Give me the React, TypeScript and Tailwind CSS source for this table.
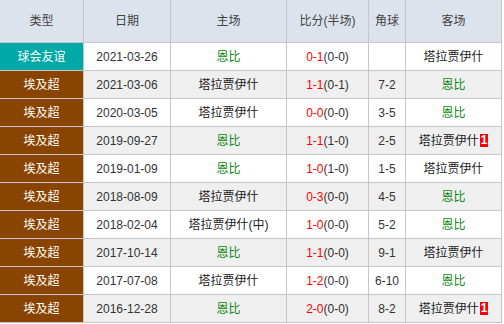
const ENBI = "恩比";
const TARAGA = "塔拉贾伊什";

type Match = {
  league: string;
  friendly?: boolean;
  date: string;
  home: string;
  score: string;
  half: string;
  corner: string;
  away: string;
  redCard?: number;
};

const matches: Match[] = [
  { league: "球会友谊", friendly: true, date: "2021-03-26", home: ENBI, score: "0-1", half: "(0-0)", corner: "", away: TARAGA },
  { league: "埃及超", date: "2021-03-06", home: TARAGA, score: "1-1", half: "(0-1)", corner: "7-2", away: ENBI },
  { league: "埃及超", date: "2020-03-05", home: TARAGA, score: "0-0", half: "(0-0)", corner: "3-5", away: ENBI },
  { league: "埃及超", date: "2019-09-27", home: ENBI, score: "1-1", half: "(1-0)", corner: "2-5", away: TARAGA, redCard: 1 },
  { league: "埃及超", date: "2019-01-09", home: ENBI, score: "1-0", half: "(1-0)", corner: "1-5", away: TARAGA },
  { league: "埃及超", date: "2018-08-09", home: TARAGA, score: "0-3", half: "(0-0)", corner: "4-5", away: ENBI },
  { league: "埃及超", date: "2018-02-04", home: "塔拉贾伊什(中)", score: "1-0", half: "(0-0)", corner: "5-2", away: ENBI },
  { league: "埃及超", date: "2017-10-14", home: ENBI, score: "1-1", half: "(0-0)", corner: "9-1", away: TARAGA },
  { league: "埃及超", date: "2017-07-08", home: TARAGA, score: "1-2", half: "(0-0)", corner: "6-10", away: ENBI },
  { league: "埃及超", date: "2016-12-28", home: ENBI, score: "2-0", half: "(0-0)", corner: "8-2", away: TARAGA, redCard: 1 },
];

const headers = ["类型", "日期", "主场", "比分(半场)", "角球", "客场"];

const cell = "flex items-center justify-center border-r border-b border-[#c6c6c6]";

function Team({ name }: { name: string }) {
  return <span className={name === ENBI ? "text-[#118811]" : "text-[#222]"}>{name}</span>;
}

export default function App() {
  return (
    <div
      className="w-[504px] h-[324px] bg-white text-[12px] text-[#333]"
      style={{ fontFamily: '"Liberation Sans", "Noto Sans CJK SC", sans-serif' }}
    >
      <div className="grid grid-cols-[84px_87px_116px_82px_37px_96px] grid-rows-[43px_repeat(10,28px)] w-[502px]">
        {headers.map((h) => (
          <div key={h} className={`${cell} bg-[#dce3ec] text-[#444]`}>
            {h}
          </div>
        ))}

        {matches.map((m, i) => {
          const rowBg = i % 2 === 1 ? "bg-[#efefef]" : "bg-white";
          return (
            <div key={m.date} className="contents">
              <div className={`${cell} text-white ${m.friendly ? "bg-[#00a8a8]" : "bg-[#884400]"}`}>
                {m.league}
              </div>
              <div className={`${cell} ${rowBg}`}>{m.date}</div>
              <div className={`${cell} ${rowBg}`}>
                <Team name={m.home} />
              </div>
              <div className={`${cell} ${rowBg}`}>
                <span className="text-[#ff0000]">{m.score}</span>
                <span>{m.half}</span>
              </div>
              <div className={`${cell} ${rowBg}`}>{m.corner}</div>
              <div className={`${cell} ${rowBg}`}>
                <Team name={m.away} />
                {m.redCard ? (
                  <span className="ml-[1px] bg-[#ff0000] px-[1px] text-white font-bold leading-[13px]">
                    {m.redCard}
                  </span>
                ) : null}
              </div>
            </div>
          );
        })}
      </div>
    </div>
  );
}
